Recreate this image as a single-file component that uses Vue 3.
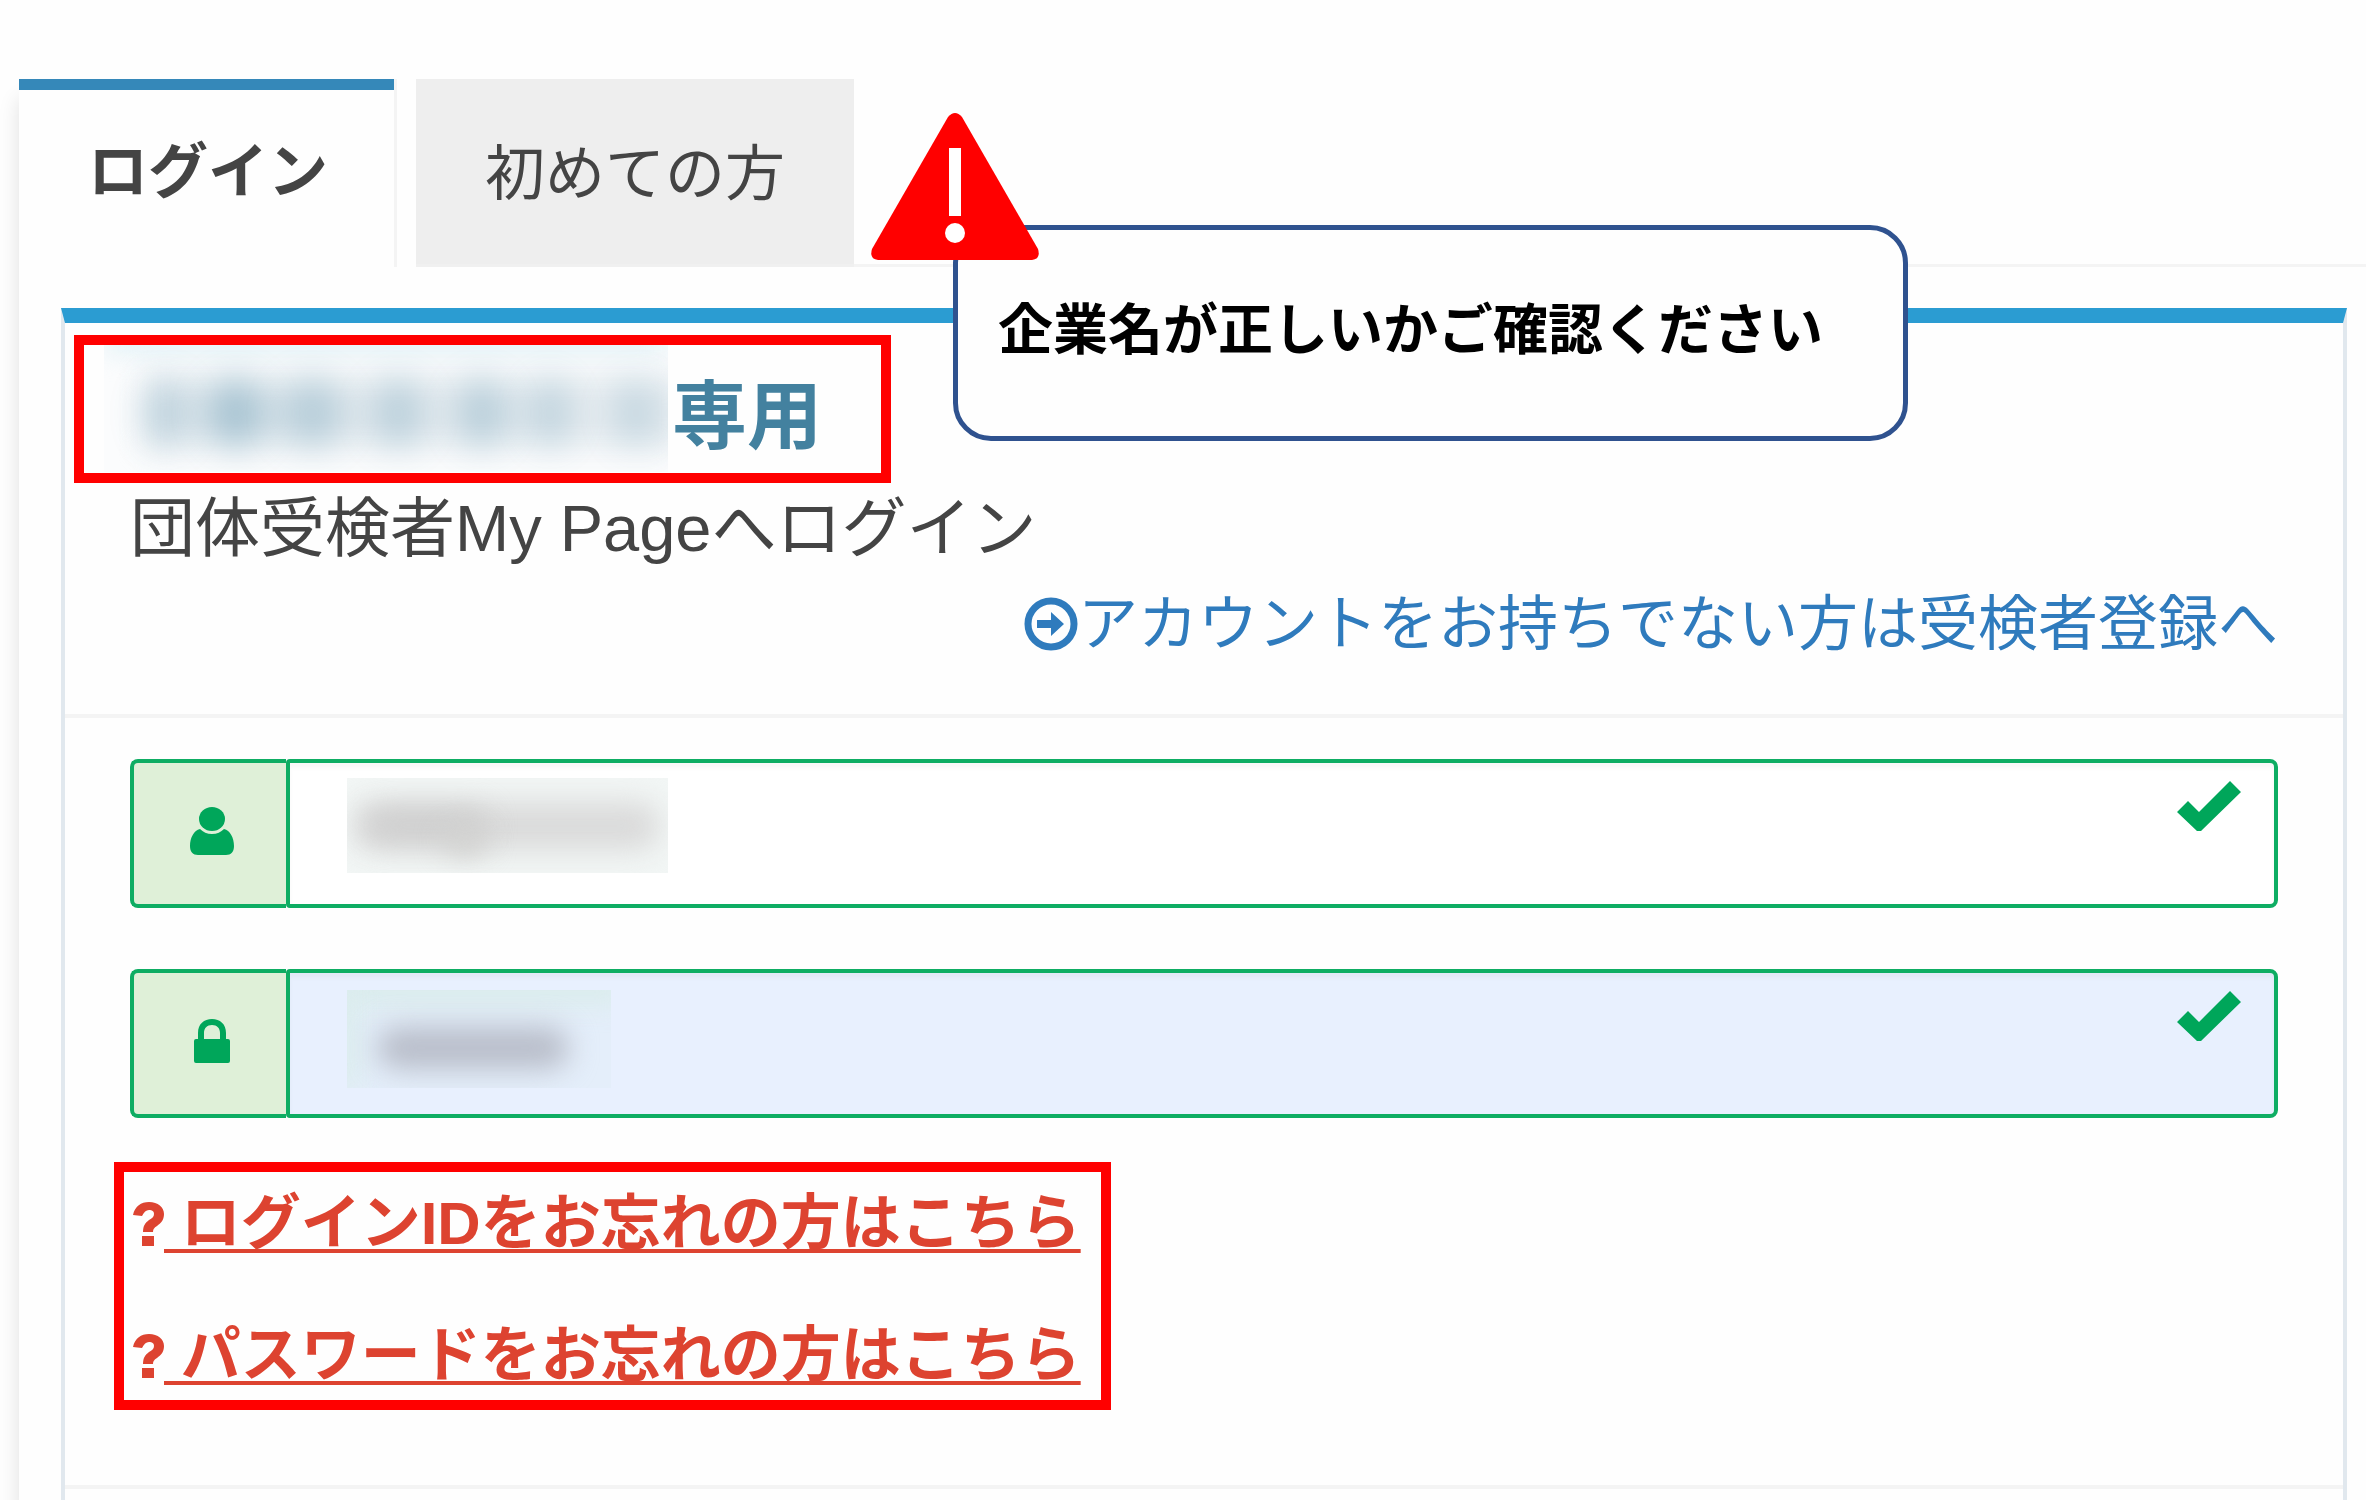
<script setup>
import { ref } from "vue";

const activeTab = ref("login");
const loginId = ref("");
const password = ref("");

// soft spots covering the company name
const nameSpots = [
  { x: 62, w: 44, o: 0.26 },
  { x: 132, w: 60, o: 0.38 },
  { x: 208, w: 66, o: 0.28 },
  { x: 294, w: 54, o: 0.26 },
  { x: 378, w: 52, o: 0.28 },
  { x: 446, w: 42, o: 0.24 },
  { x: 532, w: 46, o: 0.2 }
];

const forgotLinks = ["ログインIDをお忘れの方はこちら", "パスワードをお忘れの方はこちら"];
</script>

<template>
  <main class="page">
    <div class="card">
      <nav class="tabs">
        <button class="tab" :class="{ active: activeTab === 'login' }" @click="activeTab = 'login'">ログイン</button>
        <button class="tab" :class="{ active: activeTab === 'first' }" @click="activeTab = 'first'">初めての方</button>
      </nav>

      <div class="content">
        <section class="box">
          <header class="box-header">
            <h1 class="company marked">
              <svg class="masked-name" viewBox="0 0 564 127" aria-hidden="true">
                <rect width="564" height="127" fill="#fbfcfd" />
                <rect class="haze" x="0" y="-16" width="564" height="20" fill="#d9eef5" />
                <rect class="haze" x="40" y="30" width="540" height="74" fill="#e6ecf0" />
                <ellipse v-for="spot in nameSpots" :key="spot.x" class="spot" :cx="spot.x" cy="68" :rx="spot.w / 2"
                  ry="34" fill="#3c7f9f" :opacity="spot.o" />
              </svg>
              <span>専用</span>
            </h1>
            <p class="lead">団体受検者My Pageへログイン</p>
            <p class="register">
              <a href="#">
                <svg class="arrow" viewBox="0 0 54 54" aria-hidden="true">
                  <circle cx="27" cy="27" r="23" fill="none" stroke="currentColor" stroke-width="7" />
                  <path d="M13 23h14v-8l13 12-13 12v-8H13z" fill="currentColor" />
                </svg>アカウントをお持ちでない方は受検者登録へ</a>
            </p>
          </header>

          <form class="box-body" @submit.prevent>
            <div class="field">
              <label class="addon" for="login-id" aria-label="ログインID">
                <svg class="icon" viewBox="0 0 44 48" aria-hidden="true">
                  <path
                    d="M10 22C4 23 0 31 0 39c0 6 3 9 8 9h28c5 0 8-3 8-9 0-8-4-16-10-17-3 3-7 5-12 5s-9-2-12-5z" />
                  <ellipse cx="22" cy="12" rx="13" ry="12" />
                </svg>
              </label>
              <input id="login-id" v-model="loginId" type="text" />
              <svg class="masked id-mask" viewBox="0 0 321 95" aria-hidden="true">
                <rect width="321" height="95" fill="#f2f6f5" />
                <rect class="haze" x="6" y="24" width="306" height="48" rx="20" fill="#dadada" />
                <rect class="haze" x="20" y="32" width="120" height="30" rx="15" fill="#cecece" />
                <ellipse class="haze" cx="118" cy="64" rx="22" ry="14" fill="#d2d2d0" />
              </svg>
              <svg class="check" viewBox="0 0 64 50" aria-hidden="true">
                <path d="M0 31 11 20 22 31 53 0 64 11 24 50H20z" />
              </svg>
            </div>

            <div class="field filled">
              <label class="addon" for="password" aria-label="パスワード">
                <svg class="icon lock" viewBox="0 0 36 44" aria-hidden="true">
                  <path
                    d="M4 20v-6C4 5 10 0 18 0s14 5 14 14v6h2q2 0 2 2v20q0 2-2 2H2q-2 0-2-2V22q0-2 2-2zM10 20h16v-6c0-5-3-8-8-8s-8 3-8 8z" />
                </svg>
              </label>
              <input id="password" v-model="password" type="password" />
              <svg class="masked pass-mask" viewBox="0 0 264 98" aria-hidden="true">
                <rect width="264" height="98" fill="#e4eefa" />
                <rect class="haze" x="-10" y="-14" width="290" height="26" fill="#d8ece9" />
                <rect class="haze" x="-14" y="0" width="22" height="98" fill="#d8ece9" />
                <rect class="haze" x="30" y="37" width="192" height="42" rx="21" fill="#b8bdc9" />
              </svg>
              <svg class="check" viewBox="0 0 64 50" aria-hidden="true">
                <path d="M0 31 11 20 22 31 53 0 64 11 24 50H20z" />
              </svg>
            </div>

            <div class="forgot marked">
              <div v-for="link in forgotLinks" :key="link" class="forgot-row">
                <svg class="question" viewBox="0 0 31 44" aria-hidden="true">
                  <path
                    d="M0 13C2 4 8 0 16 0c9 0 15 5 15 12 0 6-3 9-7 12-3 2-4 3-4 6H10c0-6 2-9 6-12 3-2 5-3 5-6s-2-4-5-4-5 2-7 6zM9 34h12v10H9z" />
                </svg>
                <a href="#">&nbsp;{{ link }}</a>
              </div>
            </div>
          </form>
        </section>
      </div>
    </div>

    <aside class="callout">
      <svg class="warning" viewBox="0 0 168 147" aria-hidden="true">
        <path d="M77 4q7-8 14 0l76 132q3 10-6 11H7q-9-1-6-11z" fill="#f00" />
        <rect x="78" y="35" width="12" height="68" fill="#fff" />
        <circle cx="84" cy="120" r="10" fill="#fff" />
      </svg>
      企業名が正しいかご確認ください
    </aside>
  </main>
</template>

<style>
body {
  background-color: #fefefe;
}
</style>

<style scoped>
* {
  box-sizing: border-box;
}

.page {
  position: relative;
  min-height: 100vh;
  padding: 79px 0 0 19px;
  display: flex;
  overflow: hidden;
  font-family: "Liberation Sans", "Noto Sans CJK JP", sans-serif;
  font-size: 60px;
  line-height: 96px;
  color: #444;
}

.card {
  flex: 1;
  display: flex;
  flex-direction: column;
  box-shadow: 0 20px 20px rgba(0, 0, 0, 0.12);
}

.tabs {
  display: flex;
}

.tabs::after {
  content: "";
  flex: 1;
  border-bottom: 3px solid #f4f4f4;
}

.tab {
  height: 188px;
  padding: 6px 69px 0;
  border: none;
  border-bottom: 3px solid #f0f0f0;
  background-color: #eee;
  color: #444;
  font: inherit;
  cursor: pointer;
}

.tab.active {
  padding: 0 66px 0 69px;
  margin-right: 19px;
  border-right: 3px solid #f4f4f4;
  border-bottom: none;
  background-color: #fefefe;
  box-shadow: inset 0 11px 0 #3588b9;
  font-weight: bold;
}

.content {
  flex: 1;
  display: flex;
  padding: 41px 19px 0 42px;
}

.box {
  flex: 1;
  border: 4px solid #e1e8ee;
  border-top: 15px solid #2b9cd2;
  border-bottom: none;
}

.box-header {
  padding: 12px 65px 39px;
  border-bottom: 4px solid #f4f4f4;
}

.marked {
  width: fit-content;
  border: 10px solid #f00;
}

.company {
  display: flex;
  height: 148px;
  margin: 0 0 0 -56px;
  padding: 0 59px 0 20px;
  font-size: 75px;
  line-height: 144px;
  color: #43819f;
}

.masked-name {
  width: 564px;
  height: 127px;
  margin-right: 4px;
  overflow: hidden;
}

.haze {
  filter: blur(14px);
}

.spot {
  filter: blur(18px);
}

.lead {
  margin: 0;
  font-size: 65px;
  line-height: 92px;
}

.register {
  margin: 0;
  line-height: 100px;
  text-align: right;
}

.register a {
  color: #2f7bbd;
  text-decoration: none;
}

.arrow {
  width: 54px;
  height: 54px;
  vertical-align: -6px;
}

.box-body {
  padding: 41px 65px 75px;
  border-bottom: 4px solid #f4f4f4;
}

.field {
  position: relative;
  display: flex;
  height: 149px;
  margin-bottom: 61px;
}

.addon {
  display: flex;
  align-items: center;
  justify-content: center;
  width: 156px;
  padding: 0 0 6px 4px;
  border: 4px solid #0ead63;
  border-right: none;
  border-radius: 8px 0 0 8px;
  background-color: #dff0d8;
}

.icon {
  width: 44px;
  height: 48px;
  fill: #00a65a;
}

.lock {
  width: 36px;
  height: 44px;
}

.field input {
  flex: 1;
  min-width: 0;
  padding: 0 50px;
  border: 4px solid #0ead63;
  border-radius: 4px 8px 8px 4px;
  background-color: #fff;
  box-shadow: inset 0 5px 4px rgba(0, 0, 0, 0.03);
  color: #444;
  font: inherit;
  outline: none;
}

.filled {
  margin-bottom: 44px;
}

.filled input {
  background-color: #e8f0fe;
}

.masked {
  position: absolute;
  left: 217px;
  overflow: hidden;
}

.id-mask {
  top: 19px;
  width: 321px;
  height: 95px;
}

.pass-mask {
  top: 21px;
  width: 264px;
  height: 98px;
}

.check {
  position: absolute;
  top: 22px;
  right: 37px;
  width: 64px;
  height: 50px;
  fill: #00a65a;
}

.forgot {
  display: flex;
  flex-direction: column;
  gap: 36px;
  height: 248px;
  margin-left: -16px;
  padding: 4px 20px 0 9px;
}

.forgot-row {
  display: flex;
  align-items: center;
  color: #dd4330;
}

.question {
  width: 31px;
  height: 44px;
  fill: currentColor;
}

.forgot a {
  color: inherit;
  font-weight: bold;
  text-decoration-thickness: 4px;
  text-decoration-skip-ink: none;
  text-underline-offset: 5px;
}

.callout {
  position: absolute;
  z-index: 2;
  top: 225px;
  left: 953px;
  height: 216px;
  padding: 52px 80px 0 40px;
  border: 5px solid #2f528f;
  border-radius: 38px;
  background-color: #fefefe;
  color: #000;
  font-size: 55px;
  font-weight: bold;
  white-space: nowrap;
}

.warning {
  position: absolute;
  top: -117px;
  left: -87px;
  width: 168px;
  height: 147px;
}
</style>
